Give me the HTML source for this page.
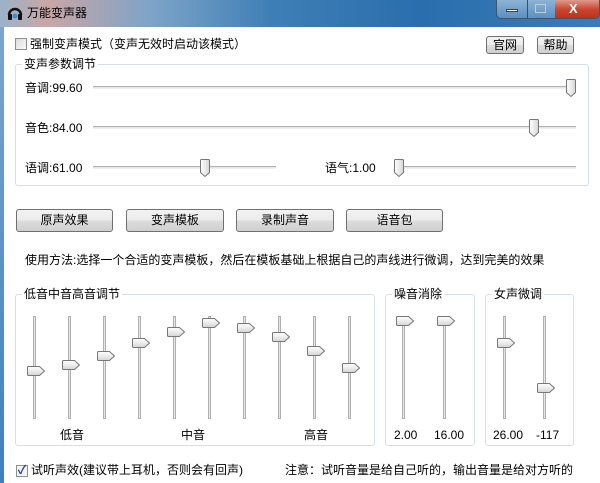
<!DOCTYPE html>
<html><head><meta charset="utf-8"><style>
*{margin:0;padding:0;box-sizing:border-box}
body{width:600px;height:483px;overflow:hidden;position:relative;background:#fff;font-family:"Liberation Sans","Noto Sans CJK SC",sans-serif;font-size:12px;color:#000}
.a{position:absolute;white-space:nowrap;line-height:14px}
.title{position:absolute;left:0;top:0;width:600px;height:27px;background:linear-gradient(90deg,#9bb3c9 0%,#c9a6a6 8%,#7ea4c8 25%,#3f7fb6 45%,#2a6ead 70%,#3b7cb8 100%)}
.lb{position:absolute;left:0;top:27px;width:4px;height:456px;background:linear-gradient(180deg,#7aa6cf,#3f80bf)}
.grp{position:absolute;border:1px solid #d5dfe5;border-radius:3px}
.gl{position:absolute;background:#fff;padding:0 2px;line-height:14px;top:-8px;left:6px}
.btn{position:absolute;border:1px solid #707070;border-radius:3px;background:linear-gradient(#f2f2f2 0%,#ebebeb 50%,#dddddd 51%,#cfcfcf 100%);text-align:center;line-height:20px}
.ht{position:absolute;height:3px;border-top:1px solid #b0b0b0;background:#e6e6e6;border-bottom:1px solid #f0f0f0}
.vt{position:absolute;width:3px;border-left:1px solid #b0b0b0;background:#e6e6e6;border-right:1px solid #f2f2f2}
.th{position:absolute}
.cb{position:absolute;width:12px;height:12px;border:1px solid #8f8f8f;background:linear-gradient(135deg,#dcdcdc,#f8f8f8)}
</style></head><body>
<div class="title"></div>
<svg class="th" style="left:7px;top:5px" width="16" height="16" viewBox="0 0 16 16"><path d="M2 10 A6 6 0 0 1 14 10" fill="none" stroke="#111" stroke-width="2.5"/><rect x="1" y="9" width="4" height="6" rx="1" fill="#111"/><rect x="11" y="9" width="4" height="6" rx="1" fill="#111"/><circle cx="8" cy="11" r="2.5" fill="#3a8fd0"/></svg>
<div class="a" style="left:27px;top:6px;font-size:12px">万能变声器</div>
<div style="position:absolute;left:496px;top:0;width:104px;height:19px;border:1px solid #40546b;border-top:none;border-radius:0 0 5px 5px;background:linear-gradient(#8db3d6,#5d8fbf);overflow:hidden">
<div style="position:absolute;left:30px;top:0;width:1px;height:19px;background:#34506e"></div>
<div style="position:absolute;left:58px;top:0;width:46px;height:19px;background:linear-gradient(#e09a8a,#c9452e 50%,#b8301c)"></div>
<div style="position:absolute;left:9px;top:9px;width:12px;height:3px;background:#fff;border:1px solid #345"></div>
<div style="position:absolute;left:38px;top:4px;width:11px;height:9px;border:1px solid #bcd;background:transparent"></div>
<div style="position:absolute;left:72px;top:0;color:#fff;font-weight:bold;font-size:13px;line-height:17px">X</div>
</div>
<div class="lb"></div>

<div class="cb" style="left:15px;top:38px"></div>
<div class="a" style="left:30px;top:37px">强制变声模式（变声无效时启动该模式）</div>
<div class="btn" style="left:486px;top:36px;width:38px;height:18px;line-height:16px">官网</div>
<div class="btn" style="left:537px;top:36px;width:37px;height:18px;line-height:16px">帮助</div>

<div class="grp" style="left:15px;top:64px;width:574px;height:122px"><div class="gl">变声参数调节</div></div>
<div class="a" style="left:25px;top:81px">音调:99.60</div>
<div class="ht" style="left:93px;top:86px;width:483px"></div>
<div class="a" style="left:25px;top:121px">音色:84.00</div>
<div class="ht" style="left:93px;top:126px;width:483px"></div>
<div class="a" style="left:25px;top:161px">语调:61.00</div>
<div class="ht" style="left:93px;top:166px;width:183px"></div>
<div class="a" style="left:325px;top:161px">语气:1.00</div>
<div class="ht" style="left:394px;top:166px;width:182px"></div>

<div class="btn" style="left:16px;top:209px;width:97px;height:23px">原声效果</div>
<div class="btn" style="left:126px;top:209px;width:98px;height:23px">变声模板</div>
<div class="btn" style="left:236px;top:209px;width:98px;height:23px">录制声音</div>
<div class="btn" style="left:346px;top:209px;width:97px;height:23px">语音包</div>
<div class="a" style="left:25px;top:253px">使用方法:选择一个合适的变声模板，然后在模板基础上根据自己的声线进行微调，达到完美的效果</div>

<div class="grp" style="left:15px;top:294px;width:360px;height:152px"><div class="gl">低音中音高音调节</div></div>
<div class="grp" style="left:385px;top:294px;width:90px;height:152px"><div class="gl">噪音消除</div></div>
<div class="grp" style="left:485px;top:294px;width:89px;height:152px"><div class="gl">女声微调</div></div>
<div class="a" style="left:60px;top:428px">低音</div>
<div class="a" style="left:181px;top:428px">中音</div>
<div class="a" style="left:304px;top:428px">高音</div>
<div class="a" style="left:394px;top:428px">2.00</div>
<div class="a" style="left:434px;top:428px">16.00</div>
<div class="a" style="left:493px;top:428px">26.00</div>
<div class="a" style="left:536px;top:428px">-117</div>

<div class="cb" style="left:16px;top:465px;background:#f4f4f4"></div>
<div class="a" style="left:16px;top:463px;width:12px;text-align:center;color:#2a43a8;font-weight:bold">✓</div>
<div class="a" style="left:31px;top:463px">试听声效(建议带上耳机，否则会有回声)</div>
<div class="a" style="left:285px;top:463px">注意：试听音量是给自己听的，输出音量是给对方听的</div>

<svg width="600" height="483" style="position:absolute;left:0;top:0" xmlns="http://www.w3.org/2000/svg">
<defs>
<linearGradient id="g" x1="0" y1="0" x2="0" y2="1"><stop offset="0" stop-color="#fdfdfd"/><stop offset="0.5" stop-color="#ececec"/><stop offset="1" stop-color="#d4d4d4"/></linearGradient>
<linearGradient id="gh" x1="0" y1="0" x2="1" y2="0"><stop offset="0" stop-color="#fdfdfd"/><stop offset="0.5" stop-color="#ececec"/><stop offset="1" stop-color="#d4d4d4"/></linearGradient>
<g id="ht"><path d="M0.5 1.5 Q0.5 0.5 1.5 0.5 H8.5 Q9.5 0.5 9.5 1.5 V13.5 L5 17.5 L0.5 13.5 Z" fill="url(#gh)" stroke="#777"/></g>
<g id="vt"><path d="M1.5 0.5 H12.5 L17.5 5 L12.5 9.5 H1.5 Q0.5 9.5 0.5 8.5 V1.5 Q0.5 0.5 1.5 0.5 Z" fill="url(#g)" stroke="#777"/></g>
</defs>
<use href="#ht" x="566" y="79"/>
<use href="#ht" x="529" y="119"/>
<use href="#ht" x="200" y="159"/>
<use href="#ht" x="394" y="159"/>
<g fill="#e6e6e6" stroke="#b0b0b0">
<rect x="33.5" y="316.5" width="2" height="102"/><rect x="68.5" y="316.5" width="2" height="102"/><rect x="103.5" y="316.5" width="2" height="102"/><rect x="138.5" y="316.5" width="2" height="102"/><rect x="173.5" y="316.5" width="2" height="102"/><rect x="208.5" y="316.5" width="2" height="102"/><rect x="243.5" y="316.5" width="2" height="102"/><rect x="278.5" y="316.5" width="2" height="102"/><rect x="313.5" y="316.5" width="2" height="102"/><rect x="348.5" y="316.5" width="2" height="102"/>
<rect x="402.5" y="316.5" width="2" height="102"/><rect x="443.5" y="316.5" width="2" height="102"/><rect x="503.5" y="316.5" width="2" height="102"/><rect x="543.5" y="316.5" width="2" height="102"/>
</g>
<use href="#vt" x="27" y="366"/>
<use href="#vt" x="62" y="360"/>
<use href="#vt" x="97" y="351"/>
<use href="#vt" x="132" y="338"/>
<use href="#vt" x="167" y="327"/>
<use href="#vt" x="202" y="318"/>
<use href="#vt" x="237" y="323"/>
<use href="#vt" x="272" y="332"/>
<use href="#vt" x="307" y="346"/>
<use href="#vt" x="342" y="363"/>
<use href="#vt" x="396" y="316"/>
<use href="#vt" x="437" y="316"/>
<use href="#vt" x="497" y="338"/>
<use href="#vt" x="537" y="383"/>
</svg>
</body></html>
